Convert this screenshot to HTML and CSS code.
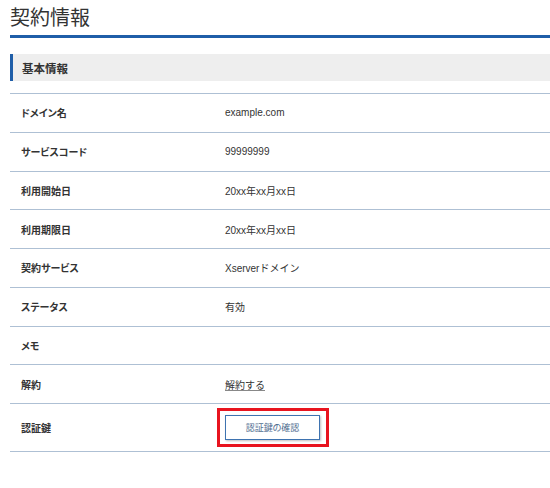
FILE: index.html
```html
<!DOCTYPE html>
<html lang="ja">
<head>
<meta charset="utf-8">
<title>契約情報</title>
<link rel="stylesheet" href="styles.css">
</head>
<body>
<div class="page">
  <h1 class="title">契約情報</h1>
  <h2 class="section">基本情報</h2>
  <div class="table">
    <div class="row"><div class="label">ドメイン名</div><div class="value">example.com</div></div>
    <div class="row"><div class="label">サービスコード</div><div class="value">99999999</div></div>
    <div class="row"><div class="label">利用開始日</div><div class="value">20xx年xx月xx日</div></div>
    <div class="row"><div class="label">利用期限日</div><div class="value">20xx年xx月xx日</div></div>
    <div class="row"><div class="label">契約サービス</div><div class="value">Xserverドメイン</div></div>
    <div class="row"><div class="label">ステータス</div><div class="value">有効</div></div>
    <div class="row"><div class="label">メモ</div><div class="value"></div></div>
    <div class="row"><div class="label">解約</div><div class="value"><a class="link" href="#">解約する</a></div></div>
    <div class="row row-tall"><div class="label">認証鍵</div><div class="value"><span class="highlight"><button class="btn" type="button">認証鍵の確認</button></span></div></div>
  </div>
</div>
</body>
</html>
```

FILE: styles.css
```css
html, body {
  margin: 0;
  padding: 0;
  background: #ffffff;
}
body {
  font-family: "Liberation Sans", "Noto Sans CJK JP", sans-serif;
  color: #333333;
  overflow: hidden;
}
.page {
  margin-left: 10px;
  width: 560px;
}
.title {
  margin: 0;
  padding: 4px 0 6px 0;
  font-family: "Noto Sans CJK JP", sans-serif;
  font-size: 20px;
  line-height: 25px;
  font-weight: 400;
  color: #333333;
  border-bottom: 3px solid #1f5ea8;
}
.section {
  margin: 16px 0 12px 0;
  height: 27px;
  box-sizing: border-box;
  padding-left: 9px;
  display: flex;
  align-items: center;
  background: #eeeeee;
  border-left: 3px solid #1f5ea8;
  font-family: "Noto Sans CJK JP", sans-serif;
  font-size: 11.5px;
  font-weight: 700;
  color: #333333;
}
.table {
  border-top: 1px solid #aec0d4;
}
.row {
  display: flex;
  align-items: center;
  height: 38.75px;
  box-sizing: border-box;
  border-bottom: 1px solid #aec0d4;
}
.row-tall {
  height: 48px;
}
.label {
  width: 215px;
  box-sizing: border-box;
  padding-left: 11px;
  font-family: "Noto Sans CJK JP", sans-serif;
  font-feature-settings: "palt";
  font-size: 10px;
  font-weight: 700;
  color: #333333;
}
.value {
  font-size: 10px;
  color: #333333;
}
.link {
  color: #333333;
  text-decoration: underline;
  text-decoration-color: #888888;
}
.highlight {
  display: inline-block;
  margin-left: -8px;
  padding: 4px 6px 4px 5px;
  border: 3px solid #e8141f;
}
.btn {
  display: block;
  width: 95px;
  height: 25px;
  margin: 0;
  padding: 0;
  background: #ffffff;
  border: 1px solid #3e73b0;
  box-shadow: 1px 1px 2px rgba(0, 0, 0, 0.25);
  font-family: "Noto Sans CJK JP", sans-serif;
  font-feature-settings: "palt";
  font-size: 9px;
  color: #4f6d8f;
  cursor: pointer;
}
```
